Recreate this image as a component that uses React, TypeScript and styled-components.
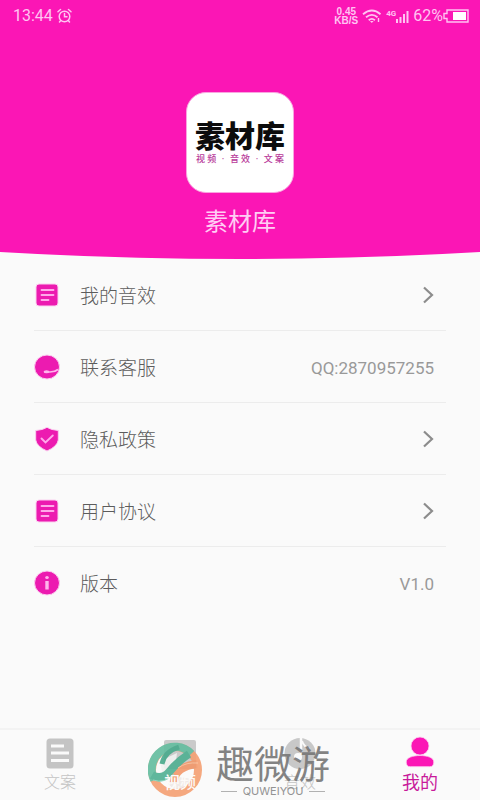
import React from "react";
import styled, { createGlobalStyle } from "styled-components";

const PINK = "#fb16b5";
const ICON_PINK = "#ec1bb0";
const SANS = `Roboto, "Noto Sans CJK SC", sans-serif`;

const GlobalStyle = createGlobalStyle`
  * { box-sizing: border-box; }
  body { margin: 0; background: #fafafa; font-family: ${SANS}; }
  button { font: inherit; color: inherit; background: none; border: 0; padding: 0; cursor: pointer; }
`;

const Page = styled.div`
  position: relative;
  display: flex;
  flex-direction: column;
  min-height: 100vh;
  background: #fafafa;
`;

const Header = styled.header`
  display: flex;
  flex-direction: column;
  align-items: center;
  background: ${PINK};
`;

const StatusBar = styled.div`
  display: flex;
  align-items: center;
  justify-content: space-between;
  width: 100%;
  height: 32px;
  padding: 0 10px 0 13px;
  color: #ffc4f2;
  font-size: 16px;
  line-height: 20px;
`;

const StatusGroup = styled.div`
  display: flex;
  align-items: center;
  gap: 4px;
`;

const NetSpeed = styled.span`
  display: flex;
  flex-direction: column;
  align-items: center;
  font-family: "Liberation Sans", sans-serif;
  font-size: 10px;
  font-weight: 700;
  line-height: 9px;
`;

const Charge = styled.span`
  display: flex;
  align-items: center;
`;

const AppBadge = styled.div`
  display: flex;
  flex-direction: column;
  align-items: center;
  justify-content: center;
  width: 108px;
  height: 101px;
  margin-top: 60px;
  border: 1px solid #f9a5e0;
  border-radius: 20px;
  background: #fff;
`;

const BadgeTitle = styled.span`
  color: #0c0c0c;
  font-size: 30px;
  font-weight: 900;
  line-height: 32px;
`;

const BadgeNote = styled.span`
  display: flex;
  justify-content: space-between;
  width: 88px;
  color: #b83a9a;
  font-size: 9px;
  font-weight: 500;
  line-height: 12px;
`;

const AppName = styled.h1`
  margin: 13px 0;
  color: #ffcdf4;
  font-size: 24px;
  font-weight: 400;
  line-height: 32px;
`;

const Curve = styled.svg`
  display: block;
  width: 100%;
  height: 8px;
  background: #fafafa;
`;

const Menu = styled.ul`
  flex: 1;
  margin: 0;
  padding: 0 34px;
  list-style: none;
`;

const MenuItem = styled.li`
  height: 72px;
  border-bottom: 1px solid #ececec;
  &:last-child { border-bottom-color: transparent; }
`;

const MenuRow = styled.div`
  && {
    display: flex;
    align-items: center;
    width: 100%;
    height: 100%;
    padding-right: 12px;
    text-align: left;
  }
  svg { flex: none; }
`;

const MenuLabel = styled.span`
  flex: 1;
  margin-left: 20px;
  padding-top: 4px;
  color: #5c5c5c;
  font-size: 19px;
  font-weight: 300;
  line-height: 28px;
`;

const MenuValue = styled.span`
  padding-top: 2px;
  color: #999;
  font-size: 17px;
  line-height: 24px;
`;

const TabBar = styled.nav`
  display: grid;
  grid-template-columns: repeat(4, 1fr);
  height: 72px;
  border-top: 2px solid #f3f3f3;
`;

const Tab = styled.button<{ $active?: boolean }>`
  && {
    display: flex;
    flex-direction: column;
    align-items: center;
    padding-top: 5px;
    color: ${(p) => (p.$active ? "#c81a9a" : "#c4c4c4")};
    font-size: ${(p) => (p.$active ? 18 : 16)}px;
    font-weight: ${(p) => (p.$active ? 400 : 300)};
    line-height: 24px;
  }
`;

const TabLabel = styled.span<{ $raised?: boolean }>`
  position: relative;
  z-index: ${(p) => (p.$raised ? 2 : 0)};
  color: ${(p) => (p.$raised ? "#fdfaf8" : "inherit")};
  font-weight: ${(p) => (p.$raised ? 500 : "inherit")};
`;

const Watermark = styled.div`
  position: absolute;
  z-index: 1;
  bottom: 0;
  left: 50%;
  display: flex;
  align-items: center;
  gap: 12px;
  width: 184px;
  height: 60px;
  margin-left: -92px;
  color: #777;
  pointer-events: none;
  opacity: 0.9;
`;

const WatermarkText = styled.div`
  display: flex;
  flex-direction: column;
  align-items: center;
`;

const WatermarkName = styled.span`
  padding-top: 2px;
  font-size: 38px;
  font-weight: 400;
  line-height: 40px;
`;

const WatermarkSub = styled.span`
  display: flex;
  align-items: center;
  gap: 6px;
  color: #888;
  font-family: Inter, sans-serif;
  font-size: 11px;
  line-height: 12px;
  &::before, &::after {
    content: "";
    width: 16px;
    height: 1px;
    background: #aaa;
  }
`;

const AlarmIcon = () => (
  <svg width="15" height="16" viewBox="0 0 15 16" fill="none" stroke="currentColor" strokeWidth="1.5" strokeLinecap="round">
    <circle cx="7.5" cy="8.5" r="5.3" />
    <path d="M7.5 5.5v3.2h2.5M1 3.7 3.5 1.5M14 3.7l-2.5-2.2M3.7 12.5 2.5 14M11.3 12.5l1.2 1.5" />
  </svg>
);

const WifiIcon = () => (
  <svg width="20" height="15" viewBox="0 0 20 15" fill="none" stroke="currentColor" strokeWidth="1.8">
    <path d="M1 5.2Q10-2.2 18.5 5.2M4 8.3q6-4.8 11.5 0M6.7 11.2q3.2-2.6 6.2 0" />
    <path d="m8 12 1.8 2 1.8-2Z" fill="currentColor" stroke="none" />
    <path d="M16.5 9v4" strokeWidth="1.4" />
  </svg>
);

const Signal = styled.span`
  display: flex;
  align-items: flex-start;
  font-size: 8px;
  font-weight: 700;
  line-height: 8px;
`;

const SignalIcon = () => (
  <svg width="13" height="13" viewBox="0 0 13 13" fill="currentColor">
    <path d="M0 9h2v4H0zM3.500 7h2v6h-2zM7 4h2v9H7zM10.500 1h2v12h-2z" />
  </svg>
);

const BatteryIcon = () => (
  <svg width="27" height="14" viewBox="0 0 27 14" fill="none">
    <path d="M4 1h21v12H4V9.5H1v-5h3Z" stroke="currentColor" strokeWidth="1.4" />
    <path d="M10 3h13v8H10z" fill="#fff" />
  </svg>
);

const NoteIcon = () => (
  <svg width="26" height="26" viewBox="0 0 26 26">
    <rect x="2" y="2" width="22" height="22" rx="3" fill={ICON_PINK} stroke="#fbd0f0" />
    <path d="M7.500 8h12M7.500 13h12M7.500 18h7" stroke="#ffa9ea" strokeWidth="1.800" strokeLinecap="round" />
  </svg>
);

const ServiceIcon = () => (
  <svg width="26" height="26" viewBox="0 0 26 26">
    <ellipse cx="13" cy="13" rx="12.5" ry="12" fill={ICON_PINK} stroke="#fbd0f0" />
    <path d="M12.5 18h3.500q5 0 8-2.500" fill="none" stroke="#ffb4ec" strokeWidth="1.7" />
    <ellipse cx="12.5" cy="17.8" rx="2.9" ry="1.5" fill="#ffb4ec" />
  </svg>
);

const ShieldIcon = () => (
  <svg width="26" height="26" viewBox="0 0 26 26">
    <path d="M13 1.300Q17 4 24.300 4.500V14q-1 6.500-11.300 11Q2.700 20.500 1.700 14V4.500Q9 4 13 1.300Z" fill={ICON_PINK} stroke="#fbd0f0" />
    <path d="m7.500 12.500 4 4 7.300-7" fill="none" stroke="#ffa9ea" strokeWidth="1.900" strokeLinecap="round" />
  </svg>
);

const InfoIcon = () => (
  <svg width="26" height="26" viewBox="0 0 26 26">
    <ellipse cx="13" cy="13" rx="12.500" ry="12" fill={ICON_PINK} stroke="#fbd0f0" />
    <ellipse cx="13" cy="7.500" rx="1.800" ry="1.500" fill="#ffb4ec" />
    <path d="M11.300 11h3.400v8.500h-3.400Z" fill="#ffb4ec" />
  </svg>
);

const ChevronIcon = () => (
  <svg width="12" height="18" viewBox="0 0 12 18" fill="none" stroke="#8c8c8c" strokeWidth="2.200">
    <path d="m2 1.500 8 7.500-8 7.500" />
  </svg>
);

const CopyTabIcon = () => (
  <svg width="28" height="36" viewBox="0 0 28 36">
    <rect x="0.500" y="3.500" width="27" height="30" rx="3.500" fill="#c4c4c4" />
    <path d="M5 11h13M5 18h18M5 25.500h18" stroke="#fafafa" strokeWidth="2.800" />
  </svg>
);

const VideoTabIcon = () => (
  <svg width="32" height="36" viewBox="0 0 32 36">
    <rect x="0" y="5" width="32" height="29" rx="2" fill="#cacaca" />
  </svg>
);

const SoundTabIcon = () => (
  <svg width="32" height="36" viewBox="0 0 32 36">
    <circle cx="16" cy="18.500" r="15.500" fill="#c8c8c8" />
    <path d="M17 3v17" stroke="#fafafa" strokeWidth="2.500" />
    <path d="M18 6q2 6 8 8" fill="none" stroke="#fafafa" strokeWidth="2" />
    <circle cx="14" cy="22" r="4" fill="#fafafa" />
  </svg>
);

const PersonTabIcon = () => (
  <svg width="30" height="36" viewBox="0 0 30 36" fill="#fb16b5" stroke="#fbd0f0" strokeWidth="0.800">
    <circle cx="15" cy="11" r="9" />
    <path d="M1.200 27C1.200 22.500 8 20.500 15 20.500s13.800 2 13.800 6.500q0 4.700-4 4.700H5.200q-4 0-4-4.700Z" />
  </svg>
);

const RingLogo = () => (
  <svg width="56" height="58" viewBox="0 0 56 58" fill="none">
    <path d="M12 20 29 12 27 28 15 36Z" fill="#f1f3f1" />
    <path d="M18 41 30 36 45 38Q38 49 27 49Z" fill="#efe9e5" />
    <circle cx="27" cy="29" r="23" stroke="#f5a072" strokeWidth="8" />
    <path d="M26 41Q26 26 49 23" stroke="#f3986a" strokeWidth="8" />
    <path d="M6.200 39A23 23 0 0 1 43.300 12.700" stroke="#63bd9f" strokeWidth="8" />
    <path d="M4 34Q14 40 22 30T41 13" stroke="#50b092" strokeWidth="8" />
    <path d="M14 23Q16 11 31 6" stroke="#48a98b" strokeWidth="5" />
    <path d="M5 39Q17 43 26 33" stroke="#8bd4bb" strokeWidth="1" />
    <path d="M30 27Q38 21 50 22" stroke="#fac09c" strokeWidth="1" />
  </svg>
);

const menu = [
  { label: "我的音效", icon: <NoteIcon /> },
  { label: "联系客服", icon: <ServiceIcon />, value: "QQ:2870957255" },
  { label: "隐私政策", icon: <ShieldIcon /> },
  { label: "用户协议", icon: <NoteIcon /> },
  { label: "版本", icon: <InfoIcon />, value: "V1.0" },
];

const tabs = [
  { label: "文案", icon: <CopyTabIcon /> },
  { label: "视频", icon: <VideoTabIcon />, raised: true },
  { label: "音效", icon: <SoundTabIcon /> },
  { label: "我的", icon: <PersonTabIcon />, active: true },
];

export default function App() {
  return (
    <Page>
      <GlobalStyle />
      <Header>
        <StatusBar>
          <StatusGroup>
            <span>13:44</span>
            <AlarmIcon />
          </StatusGroup>
          <StatusGroup>
            <NetSpeed>
              <span>0.45</span>
              <span>KB/S</span>
            </NetSpeed>
            <WifiIcon />
            <Signal>4G<SignalIcon /></Signal>
            <Charge>62%<BatteryIcon /></Charge>
          </StatusGroup>
        </StatusBar>
        <AppBadge>
          <BadgeTitle>素材库</BadgeTitle>
          <BadgeNote>
            <span>视 频</span><span>·</span><span>音 效</span><span>·</span><span>文 案</span>
          </BadgeNote>
        </AppBadge>
        <AppName>素材库</AppName>
        <Curve viewBox="0 0 480 8" preserveAspectRatio="none">
          <path d="M0 1Q120 8 240 8T480 1V0H0Z" fill={PINK} />
        </Curve>
      </Header>
      <Menu>
        {menu.map((m) => (
          <MenuItem key={m.label}>
            <MenuRow as={m.value ? "div" : "button"}>
              {m.icon}
              <MenuLabel>{m.label}</MenuLabel>
              {m.value ? <MenuValue>{m.value}</MenuValue> : <ChevronIcon />}
            </MenuRow>
          </MenuItem>
        ))}
      </Menu>
      <TabBar>
        {tabs.map((t) => (
          <Tab key={t.label} $active={t.active} aria-current={t.active ? "page" : undefined}>
            {t.icon}
            <TabLabel $raised={t.raised}>{t.label}</TabLabel>
          </Tab>
        ))}
      </TabBar>
      <Watermark>
        <RingLogo />
        <WatermarkText>
          <WatermarkName>趣微游</WatermarkName>
          <WatermarkSub>QUWEIYOU</WatermarkSub>
        </WatermarkText>
      </Watermark>
    </Page>
  );
}
